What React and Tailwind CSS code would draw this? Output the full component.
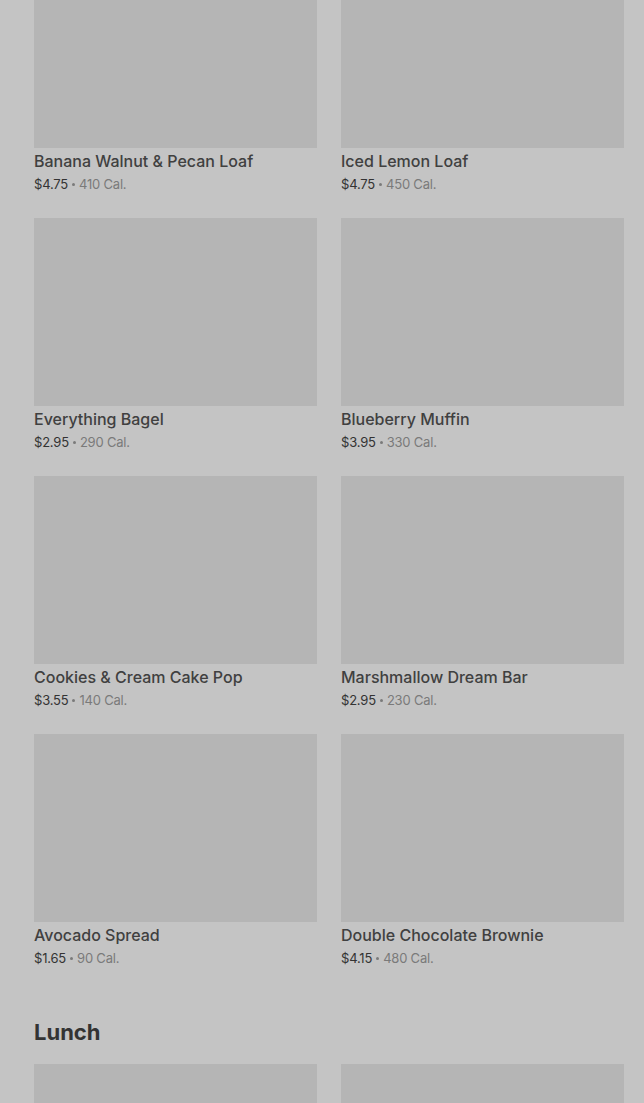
import React from 'react';

const breakfast = [
  { name: 'Banana Walnut & Pecan Loaf', price: '$4.75', cal: '410 Cal.' },
  { name: 'Iced Lemon Loaf', price: '$4.75', cal: '450 Cal.' },
  { name: 'Everything Bagel', price: '$2.95', cal: '290 Cal.' },
  { name: 'Blueberry Muffin', price: '$3.95', cal: '330 Cal.' },
  { name: 'Cookies & Cream Cake Pop', price: '$3.55', cal: '140 Cal.' },
  { name: 'Marshmallow Dream Bar', price: '$2.95', cal: '230 Cal.' },
  { name: 'Avocado Spread', price: '$1.65', cal: '90 Cal.' },
  { name: 'Double Chocolate Brownie', price: '$4.15', cal: '480 Cal.' },
];

const Item = ({ item }) => (
  <div className="flex flex-col">
    <div className="h-[188px] bg-[#b5b5b5]" />
    {item && (
      <div className="pt-[1px]">
        <div className="text-[16px] leading-[24px] font-medium text-[#404040]">{item.name}</div>
        <div className="mt-[1px] flex h-[20px] items-center text-[13px] leading-[20px] tracking-[-0.2px]">
          <span className="text-[#333333]">{item.price}</span>
          <span className="mx-[4px] h-[3px] w-[3px] rounded-full bg-[#7a7a7a]" />
          <span className="text-[#7a7a7a]">{item.cal}</span>
        </div>
      </div>
    )}
  </div>
);

const App = () => {
  return (
    <div
      className="h-[1103px] overflow-hidden bg-[#c4c4c4] pl-[34px] pr-[20px]"
      style={{ fontFamily: 'Inter, "Noto Sans", sans-serif' }}
    >
      <div className="-mt-[40px] grid grid-cols-2 gap-x-[24px] gap-y-[24px]">
        {breakfast.map((item) => (
          <Item key={item.name} item={item} />
        ))}
      </div>
      <h2 className="mt-[50px] text-[22px] leading-[28px] font-bold text-[#333333]">Lunch</h2>
      <div className="mt-[18px] grid grid-cols-2 gap-x-[24px]">
        <Item />
        <Item />
      </div>
    </div>
  );
};

export default App;
